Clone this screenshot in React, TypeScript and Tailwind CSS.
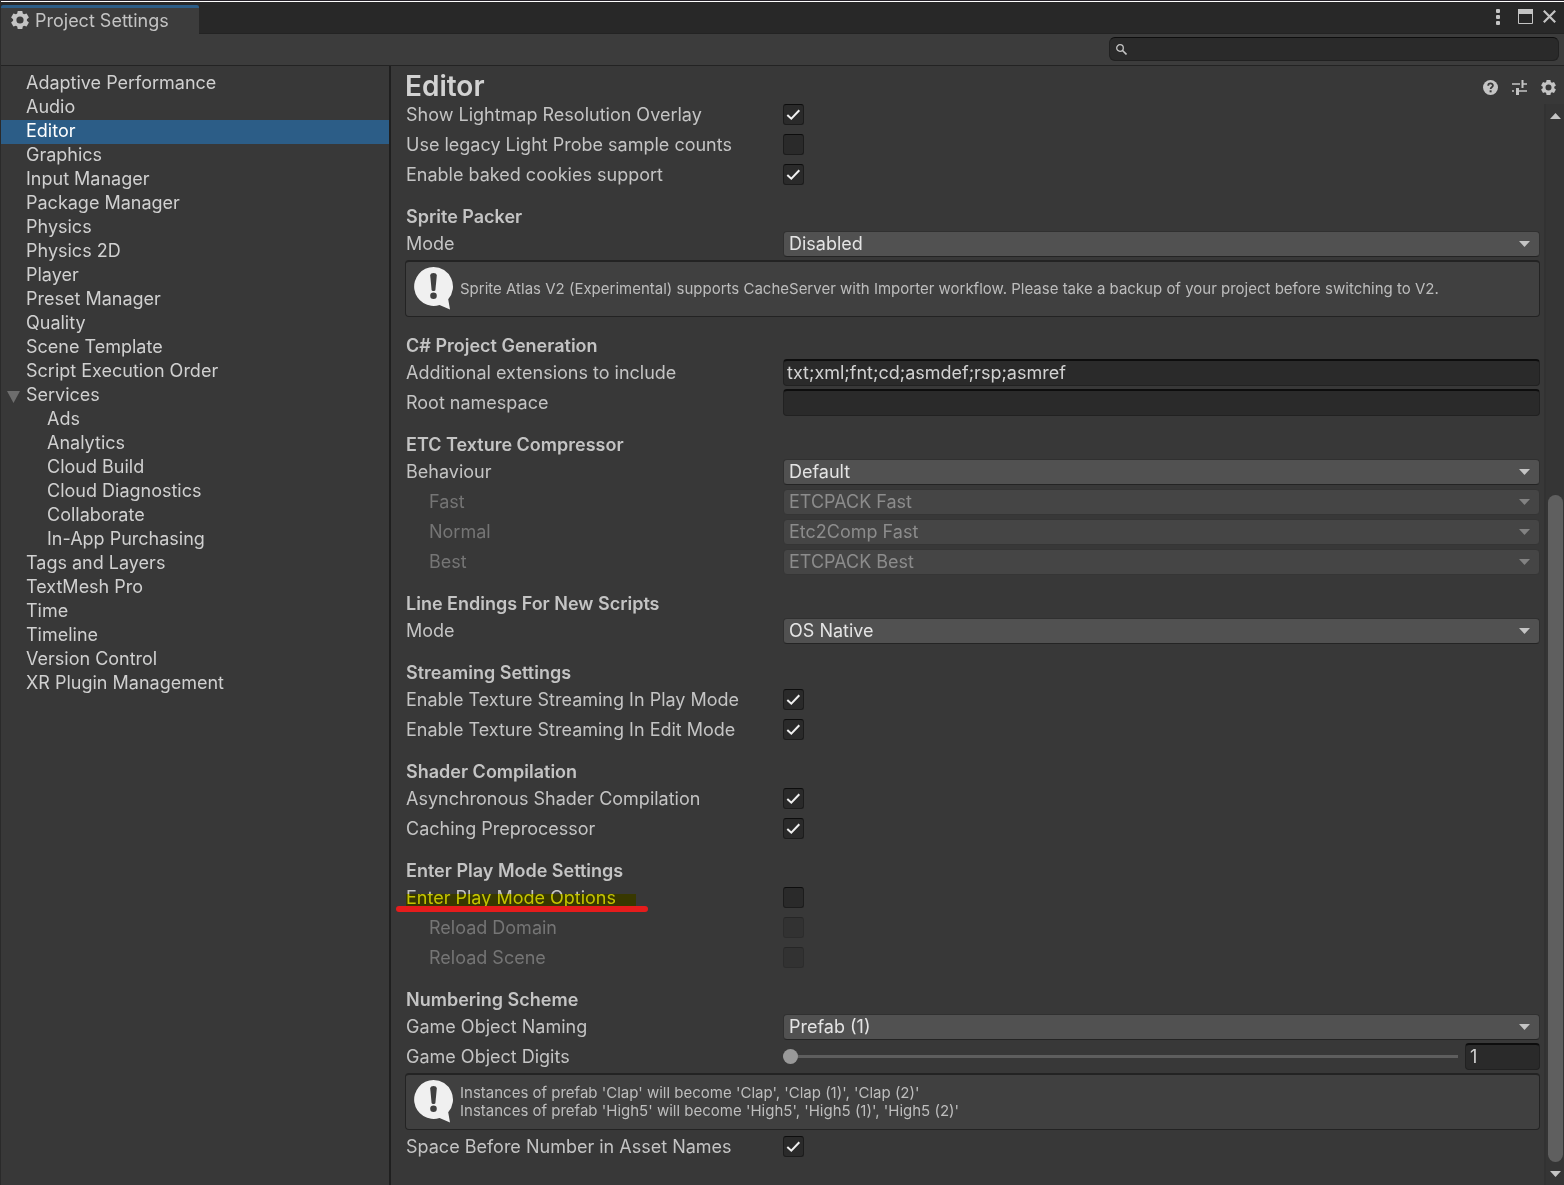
import { useId, useState } from "react";
import type { ReactNode } from "react";

type Category = { name: string; child?: boolean; open?: boolean };

const categories: Category[] = [
  { name: "Adaptive Performance" },
  { name: "Audio" },
  { name: "Editor" },
  { name: "Graphics" },
  { name: "Input Manager" },
  { name: "Package Manager" },
  { name: "Physics" },
  { name: "Physics 2D" },
  { name: "Player" },
  { name: "Preset Manager" },
  { name: "Quality" },
  { name: "Scene Template" },
  { name: "Script Execution Order" },
  { name: "Services", open: true },
  { name: "Ads", child: true },
  { name: "Analytics", child: true },
  { name: "Cloud Build", child: true },
  { name: "Cloud Diagnostics", child: true },
  { name: "Collaborate", child: true },
  { name: "In-App Purchasing", child: true },
  { name: "Tags and Layers" },
  { name: "TextMesh Pro" },
  { name: "Time" },
  { name: "Timeline" },
  { name: "Version Control" },
  { name: "XR Plugin Management" },
];

const GearIcon = ({ size }: { size: number }) => (
  <svg width={size} height={size} viewBox="0 0 18 18" fill="currentColor" fillRule="evenodd">
    <path d="M6.700 0h4.600l.5 2.500 1.300.8 2.500-.8 2.300 4-2 1.700v1.600l2 1.700-2.300 4-2.500-.8-1.300.8-.5 2.500H6.700l-.5-2.500-1.300-.8-2.500.8-2.300-4 2-1.700V8.200l-2-1.700 2.300-4 2.500.8 1.300-.8zM9 5.400a3.600 3.600 0 1 0 0 7.200 3.600 3.600 0 0 0 0-7.200z" />
  </svg>
);

const Triangle = ({ up = false }: { up?: boolean }) => (
  <svg width="11" height="6" viewBox="0 0 11 6" fill="currentColor">
    <path d={up ? "M5.500 0L11 6H0z" : "M0 0h11L5.500 6z"} />
  </svg>
);

const BubbleIcon = () => (
  <svg width="40" height="43" viewBox="0 0 40 43" className="shrink-0">
    <path d="M19.500 0a19.500 19.500 0 0 1 14.700 32.300L36 42.500l-10.500-4.400A19.500 19.500 0 1 1 19.500 0z" fill="#f0f0f0" />
    <path d="M16.200 8.500c0-3.300 6.600-3.300 6.600 0l-1.400 14.600c-.2 1.300-3.600 1.300-3.800 0z" fill="#404040" />
    <circle cx="19.500" cy="28.800" r="3.300" fill="#404040" />
  </svg>
);

function Section({ title, children }: { title: string; children: ReactNode }) {
  return (
    <section className="pt-[15px]">
      <h2 className="h-6 leading-6 font-semibold">{title}</h2>
      {children}
    </section>
  );
}

type RowProps = { id: string; label: string; disabled?: boolean; marked?: boolean; children: ReactNode };

function Row({ id, label, disabled, marked, children }: RowProps) {
  return (
    <div className="flex h-[30px] items-center pb-px">
      <div className={`flex w-[377px] shrink-0 pt-px ${disabled ? "pl-[23px] text-[#757575]" : ""}`}>
        <label htmlFor={id} className="relative leading-6">
          {label}
          {marked && (
            <>
              <span className="absolute top-2 -right-5 bottom-1 left-0 bg-[#ffff00] mix-blend-multiply" />
              <span className="absolute -right-8 -bottom-0.5 -left-2.5 h-1.5 rounded-full bg-[#e61c1c]" />
            </>
          )}
        </label>
      </div>
      {children}
    </div>
  );
}

type ToggleProps = { label: string; on?: boolean; disabled?: boolean; marked?: boolean };

function Toggle({ label, on = false, disabled, marked }: ToggleProps) {
  const id = useId();
  return (
    <Row id={id} label={label} disabled={disabled} marked={marked}>
      <span className={`grid ${disabled ? "opacity-40" : ""}`}>
        <input
          id={id}
          type="checkbox"
          defaultChecked={on}
          disabled={disabled}
          className="peer col-start-1 row-start-1 size-[21px] appearance-none rounded-[3px] border border-[#1c1c1c] border-t-[#0d0d0d] bg-[#2a2a2a]"
        />
        <svg
          viewBox="0 0 21 21"
          className="pointer-events-none invisible col-start-1 row-start-1 size-[21px] peer-checked:visible"
          fill="none"
          stroke="#f0f0f0"
          strokeWidth="2"
        >
          <path d="M4.300 11l4 3.700 8-8.500" />
        </svg>
      </span>
    </Row>
  );
}

function Dropdown({ label, value, disabled }: { label: string; value: string; disabled?: boolean }) {
  const id = useId();
  return (
    <Row id={id} label={label} disabled={disabled}>
      <div className="grid flex-1 items-center pt-px">
        <select
          id={id}
          disabled={disabled}
          className="col-start-1 row-start-1 h-[26px] w-full appearance-none rounded-[4px] border border-[#303030] border-b-[#242424] bg-[#515151] px-[5px] leading-6 text-[#e4e4e4] opacity-100 disabled:border-[#353535] disabled:bg-[#454545] disabled:text-[#8c8c8c]"
        >
          <option>{value}</option>
        </select>
        <span
          className={`pointer-events-none col-start-1 row-start-1 mr-[10px] justify-self-end ${disabled ? "text-[#828282]" : "text-[#c4c4c4]"}`}
        >
          <Triangle />
        </span>
      </div>
    </Row>
  );
}

function TextField({ label, value = "" }: { label: string; value?: string }) {
  const id = useId();
  return (
    <Row id={id} label={label}>
      <input
        id={id}
        type="text"
        defaultValue={value}
        className="h-[27px] min-w-0 flex-1 rounded-[4px] border border-t-2 border-[#212121] border-t-[#0d0d0d] bg-[#2a2a2a] px-[3px] pb-0.5 text-[#d2d2d2]"
      />
    </Row>
  );
}

function Digits() {
  const id = useId();
  const [digits, setDigits] = useState("1");
  return (
    <Row id={id} label="Game Object Digits">
      <input
        id={id}
        type="range"
        min="1"
        max="5"
        value={digits}
        onChange={e => setDigits(e.target.value)}
        className="h-[15px] min-w-0 flex-1 appearance-none bg-transparent [&::-webkit-slider-runnable-track]:h-[3px] [&::-webkit-slider-runnable-track]:bg-[#5e5e5e] [&::-webkit-slider-thumb]:-mt-1.5 [&::-webkit-slider-thumb]:size-[15px] [&::-webkit-slider-thumb]:appearance-none [&::-webkit-slider-thumb]:rounded-full [&::-webkit-slider-thumb]:bg-[#999999]"
      />
      <input
        type="text"
        aria-label="Digits"
        value={digits}
        onChange={e => setDigits(e.target.value)}
        className="ml-[7px] h-[27px] w-[75px] rounded-[4px] border border-t-2 border-[#212121] border-t-[#0d0d0d] bg-[#2a2a2a] px-1 pb-0.5 text-[#d2d2d2]"
      />
    </Row>
  );
}

function HelpBox({ lines }: { lines: string[] }) {
  return (
    <div className="mt-px mb-0.5 -ml-px flex h-[57px] items-center gap-[6px] rounded-[4px] border border-t-2 border-[#232323] bg-[#404040] px-2 pb-px">
      <BubbleIcon />
      <div className="text-[15px] leading-[18px] text-[#bdbdbd]">
        {lines.map(line => (
          <p key={line}>{line}</p>
        ))}
      </div>
    </div>
  );
}

function Sidebar() {
  const [selected, setSelected] = useState("Editor");
  return (
    <nav className="w-[390px] shrink-0 border-r-2 border-[#1f1f1f] pt-1.5">
      <ul>
        {categories.map(({ name, child, open }) => (
          <li key={name}>
            <button
              onClick={() => setSelected(name)}
              className={`flex h-6 w-full items-center pb-1 ${child ? "pl-[46px]" : open ? "pl-[6px]" : "pl-[25px]"} ${
                name === selected ? "bg-[#2c5d87] text-white" : "text-[#d0d0d0]"
              }`}
            >
              {open && (
                <svg width="13" height="12" viewBox="0 0 13 12" className="mt-1.5 mr-[6px]" fill="#6e6e6e">
                  <path d="M0 0h13L6.500 12z" />
                </svg>
              )}
              {name}
            </button>
          </li>
        ))}
      </ul>
    </nav>
  );
}

function ScrollBar() {
  return (
    <div className="mt-1 flex w-5 shrink-0 flex-col items-stretch border-l-2 border-[#323232] bg-[#353535] pr-px pl-0.5 text-[#c4c4c4]">
      <button aria-label="Scroll up" className="flex h-6 items-center justify-center">
        <Triangle up />
      </button>
      <div className="flex-[367]" />
      <div className="flex-[667] rounded-full bg-[#5f5f5f]" />
      <button aria-label="Scroll down" className="flex h-[23px] items-center justify-center">
        <Triangle />
      </button>
    </div>
  );
}

export default function App() {
  return (
    <div className="flex min-h-screen flex-col border-l border-[#2a2a2a] bg-[#383838] font-['Inter',sans-serif] text-[18px] text-[#c4c4c4]">
      {/* Window edge */}
      <div className="h-0.5 border-b border-white bg-[#28242c]" />

      {/* Title bar */}
      <header className="flex h-8 items-end justify-between border-b border-[#232323] bg-[#282828]">
        <div className="-mb-px flex h-[29px] w-[198px] items-center gap-[6px] rounded-t-[2px] border-t-[3px] border-[#2c5d87] bg-[#3c3c3c] pb-0.5 pl-[10px]">
          <GearIcon size={18} />
          <h1>Project Settings</h1>
        </div>
        <div className="flex h-full items-center pr-2 pb-0.5">
          <button aria-label="More" className="mr-[18px]">
            <svg width="4" height="16" viewBox="0 0 4 16" fill="currentColor">
              <rect width="4" height="4" rx="1" />
              <rect y="6" width="4" height="4" rx="1" />
              <rect y="12" width="4" height="4" rx="1" />
            </svg>
          </button>
          <button aria-label="Maximize" className="mr-[10px]">
            <svg width="15" height="15" viewBox="0 0 15 15" fill="none" stroke="currentColor">
              <path d="M.5 0v14.500h14V0" />
              <path d="M0 2.500h15" strokeWidth="5" />
            </svg>
          </button>
          <button aria-label="Close">
            <svg width="13" height="13" viewBox="0 0 13 13" fill="none" stroke="currentColor" strokeWidth="2.200">
              <path d="M.8.8l11.400 11.400M12.200.8L.8 12.200" />
            </svg>
          </button>
        </div>
      </header>

      {/* Search toolbar */}
      <div className="flex h-8 items-center justify-end border-b border-[#232323] bg-[#3c3c3c] pr-[5px] pb-px">
        <label className="flex h-6 w-[450px] items-center rounded-[6px] border border-[#212121] border-t-[#0d0d0d] bg-[#2a2a2a] pl-[6px]">
          <svg width="11" height="11" viewBox="0 0 11 11" fill="none" stroke="currentColor">
            <circle cx="4" cy="4" r="3.300" strokeWidth="1.300" />
            <path d="M6.300 6.300l4.200 4.200" strokeWidth="1.600" />
          </svg>
          <input type="search" aria-label="Search settings" className="h-5 min-w-0 flex-1 px-2 outline-none" />
        </label>
      </div>

      <div className="flex flex-1">
        <Sidebar />
        <main className="flex min-w-0 flex-1 flex-col">
          <div className="flex h-[34px] items-center justify-between pt-1.5 pr-2 pl-[14px]">
            <h2 className="text-[28px] leading-8 font-semibold text-[#d2d2d2]">Editor</h2>
            <div className="flex items-center gap-[14px] pt-0.5">
              <button aria-label="Help">
                <svg width="15" height="15" viewBox="0 0 15 15">
                  <circle cx="7.500" cy="7.500" r="7.500" fill="currentColor" />
                  <path d="M5.200 5.700c0-3 4.700-3 4.700-.2 0 1.800-2.300 1.700-2.300 3.600" fill="none" stroke="#383838" strokeWidth="1.800" />
                  <rect x="6.600" y="10.300" width="2" height="2" fill="#383838" />
                </svg>
              </button>
              <button aria-label="Presets">
                <svg width="15" height="15" viewBox="0 0 15 15" fill="none" stroke="currentColor">
                  <path d="M0 4h8M10 4h5M0 11h2M7 11h8" strokeWidth="1.400" />
                  <path d="M10.500 0v8" strokeWidth="2" />
                  <path d="M5.500 8V15" strokeWidth="3" />
                </svg>
              </button>
              <button aria-label="Settings menu">
                <GearIcon size={15} />
              </button>
            </div>
          </div>

          <div className="flex flex-1">
            <div className="min-w-0 flex-1 pr-1 pb-[23px] pl-[15px]">
              <Toggle label="Show Lightmap Resolution Overlay" on />
              <Toggle label="Use legacy Light Probe sample counts" />
              <Toggle label="Enable baked cookies support" on />

              <Section title="Sprite Packer">
                <Dropdown label="Mode" value="Disabled" />
                <HelpBox
                  lines={[
                    "Sprite Atlas V2 (Experimental) supports CacheServer with Importer workflow. Please take a backup of your project before switching to V2.",
                  ]}
                />
              </Section>

              <Section title="C# Project Generation">
                <TextField label="Additional extensions to include" value="txt;xml;fnt;cd;asmdef;rsp;asmref" />
                <TextField label="Root namespace" />
              </Section>

              <Section title="ETC Texture Compressor">
                <Dropdown label="Behaviour" value="Default" />
                <Dropdown label="Fast" value="ETCPACK Fast" disabled />
                <Dropdown label="Normal" value="Etc2Comp Fast" disabled />
                <Dropdown label="Best" value="ETCPACK Best" disabled />
              </Section>

              <Section title="Line Endings For New Scripts">
                <Dropdown label="Mode" value="OS Native" />
              </Section>

              <Section title="Streaming Settings">
                <Toggle label="Enable Texture Streaming In Play Mode" on />
                <Toggle label="Enable Texture Streaming In Edit Mode" on />
              </Section>

              <Section title="Shader Compilation">
                <Toggle label="Asynchronous Shader Compilation" on />
                <Toggle label="Caching Preprocessor" on />
              </Section>

              <Section title="Enter Play Mode Settings">
                <Toggle label="Enter Play Mode Options" marked />
                <Toggle label="Reload Domain" disabled />
                <Toggle label="Reload Scene" disabled />
              </Section>

              <Section title="Numbering Scheme">
                <Dropdown label="Game Object Naming" value="Prefab (1)" />
                <Digits />
                <HelpBox
                  lines={[
                    "Instances of prefab 'Clap' will become 'Clap', 'Clap (1)', 'Clap (2)'",
                    "Instances of prefab 'High5' will become 'High5', 'High5 (1)', 'High5 (2)'",
                  ]}
                />
                <Toggle label="Space Before Number in Asset Names" on />
              </Section>
            </div>
            <ScrollBar />
          </div>
        </main>
      </div>
    </div>
  );
}
